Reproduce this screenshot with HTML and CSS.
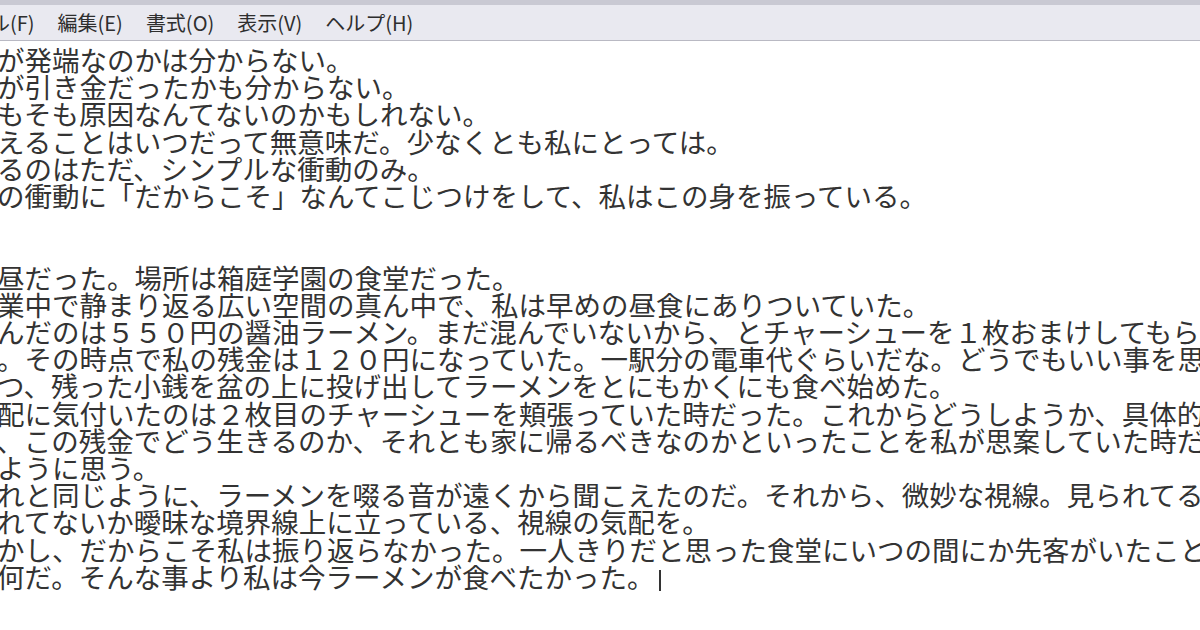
FILE: index.html
```html
<!DOCTYPE html>
<html lang="ja">
<head>
    <meta charset="UTF-8">
    <meta name="viewport" content="width=device-width, initial-scale=1.0">
    <title>無題 - メモ帳</title>
    <link rel="stylesheet" href="styles.css">
</head>
<body>
    <div class="window">
        <div class="menubar">
            <span class="menu first">ファイル(F)</span>
            <span class="menu">編集(E)</span>
            <span class="menu">書式(O)</span>
            <span class="menu">表示(V)</span>
            <span class="menu">ヘルプ(H)</span>
        </div>
        <div class="editor">
            <div class="text">
                <p>何が発端なのかは分からない。</p>
                <p>何が引き金だったかも分からない。</p>
                <p>そもそも原因なんてないのかもしれない。</p>
                <p>考えることはいつだって無意味だ。少なくとも私にとっては。</p>
                <p>あるのはただ、シンプルな衝動のみ。</p>
                <p>その衝動に「だからこそ」なんてこじつけをして、私はこの身を振っている。</p>
                <p>&nbsp;</p>
                <p>&nbsp;</p>
                <p>お昼だった。場所は箱庭学園の食堂だった。</p>
                <p>授業中で静まり返る広い空間の真ん中で、私は早めの昼食にありついていた。</p>
                <p>頼んだのは５５０円の醤油ラーメン。まだ混んでいないから、とチャーシューを１枚おまけしてもらった。</p>
                <p>た。その時点で私の残金は１２０円になっていた。一駅分の電車代ぐらいだな。どうでもいい事を思いつつ、</p>
                <p>いつ、残った小銭を盆の上に投げ出してラーメンをとにもかくにも食べ始めた。</p>
                <p>気配に気付いたのは２枚目のチャーシューを頬張っていた時だった。これからどうしようか、具体的に</p>
                <p>に、この残金でどう生きるのか、それとも家に帰るべきなのかといったことを私が思案していた時だった</p>
                <p>たように思う。</p>
                <p>それと同じように、ラーメンを啜る音が遠くから聞こえたのだ。それから、微妙な視線。見られてるか見ら</p>
                <p>られてないか曖昧な境界線上に立っている、視線の気配を。</p>
                <p>しかし、だからこそ私は振り返らなかった。一人きりだと思った食堂にいつの間にか先客がいたことなど</p>
                <p>が何だ。そんな事より私は今ラーメンが食べたかった。<span class="caret"></span></p>
            </div>
        </div>
    </div>
</body>
</html>
```

FILE: styles.css
```css
body {
    margin: 0;
    padding: 0;
    background-color: #ffffff;
    overflow: hidden;
}
.window {
    width: 1200px;
    height: 630px;
    display: flex;
    flex-direction: column;
    overflow: hidden;
}
.menubar {
    height: 35px;
    flex-shrink: 0;
    background-color: #e9e9f0;
    border-top: 5px solid #c9c9d3;
    border-bottom: 1px solid #b9b9c3;
    display: flex;
    align-items: center;
    gap: 23px;
    font-family: "Noto Sans CJK JP", sans-serif;
    font-size: 20px;
    color: #2e2e2e;
    white-space: nowrap;
    overflow: hidden;
}
.menu.first {
    margin-left: -70px;
}
.editor {
    flex: 1;
    overflow: hidden;
    background-color: #fff;
    padding-top: 5px;
}
.text {
    margin-left: -30.5px;
    font-family: "Noto Sans CJK JP", sans-serif;
    font-size: 27.5px;
    line-height: 27.2px;
    color: #333;
}
.text p {
    margin: 0;
    white-space: pre;
}
.caret {
    display: inline-block;
    width: 2px;
    height: 21px;
    background-color: #333;
    vertical-align: -3px;
    margin-left: 4px;
}
```
